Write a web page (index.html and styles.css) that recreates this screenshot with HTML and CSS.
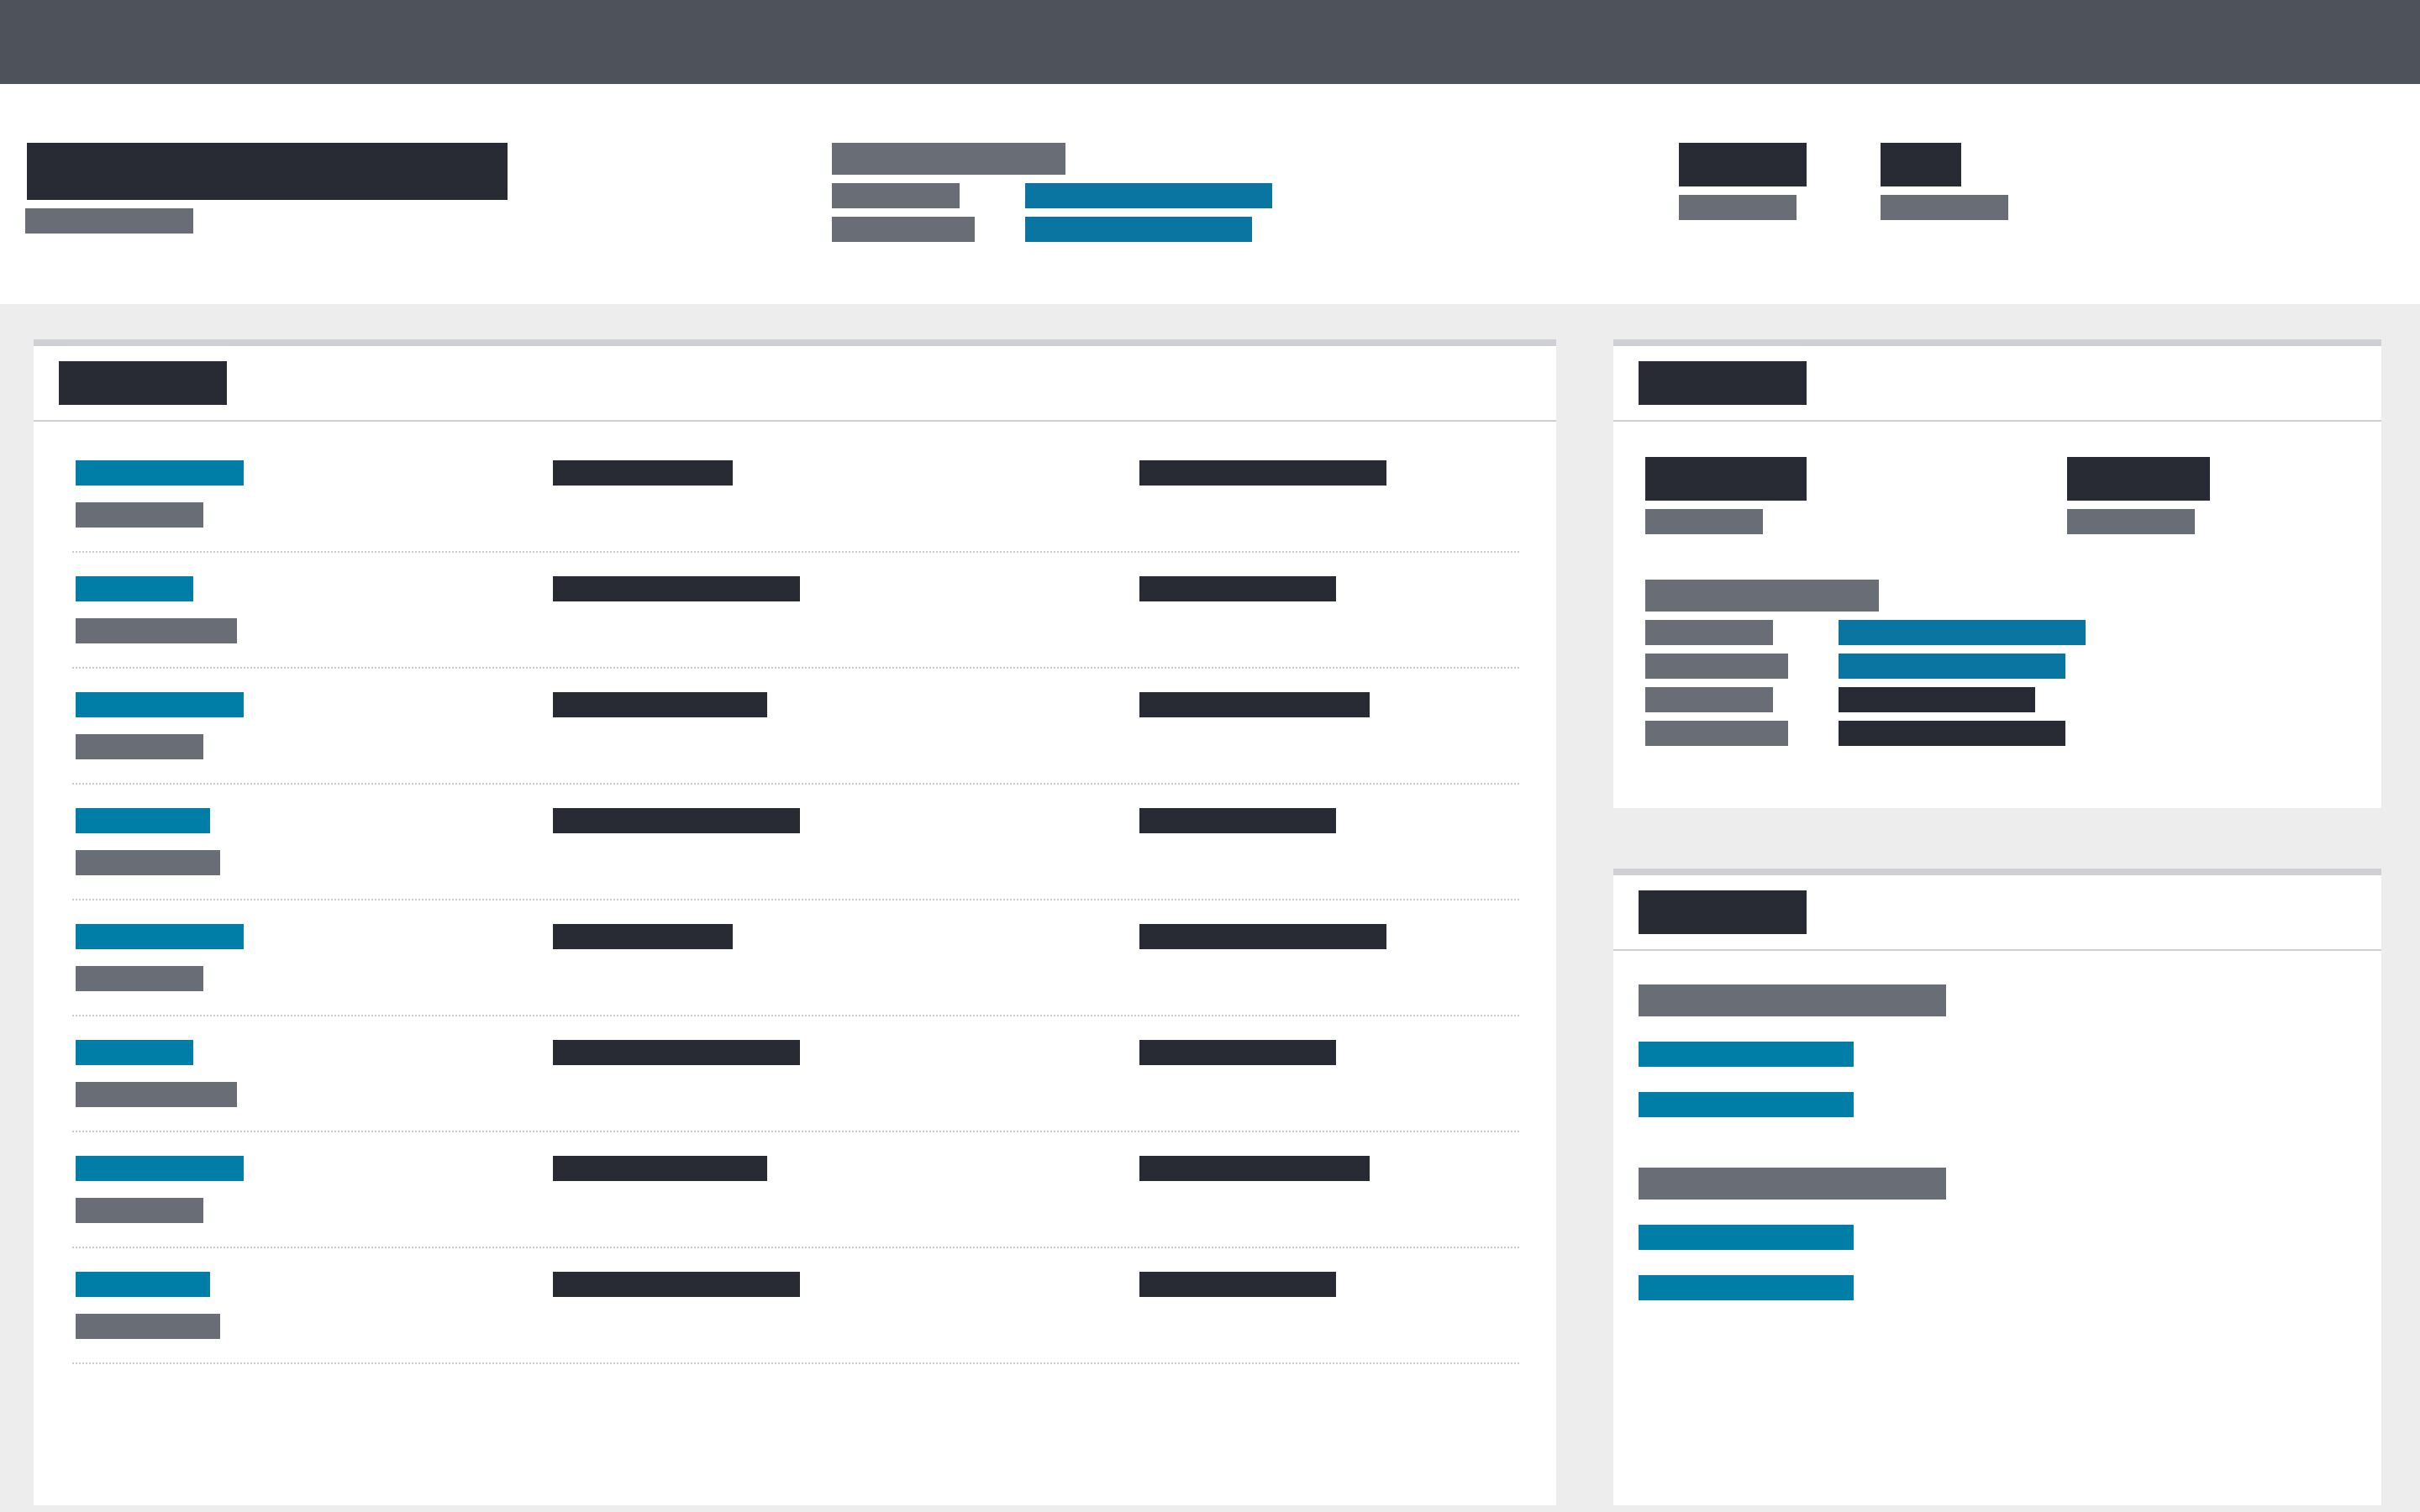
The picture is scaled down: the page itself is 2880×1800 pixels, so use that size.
FILE: index.html
```html
<!DOCTYPE html>
<html lang="en">
<head>
<meta charset="utf-8">
<title>Dashboard</title>
<link rel="stylesheet" href="styles.css">
</head>
<body>
<header class="topbar"></header>

<section class="summary">
  <div class="summary-title">
    <div class="bar dark title-bar"></div>
    <div class="bar gray sub-bar"></div>
  </div>
  <div class="summary-meta">
    <div class="bar gray w278 h38"></div>
    <div class="kv">
      <div class="bar gray w152"></div><div class="bar blue2 w294"></div>
      <div class="bar gray w170"></div><div class="bar blue2 w270"></div>
    </div>
  </div>
  <div class="summary-stats">
    <div class="stat stat-a">
      <div class="bar dark w152 h52"></div>
      <div class="bar gray w140 stat-label"></div>
    </div>
    <div class="stat">
      <div class="bar dark w96 h52"></div>
      <div class="bar gray w152 stat-label"></div>
    </div>
  </div>
</section>

<main class="content">
  <section class="card card-main">
    <div class="card-head"><div class="bar dark w200 h52"></div></div>
    <div class="list">
      <div class="row">
        <div class="cell"><div class="bar blue w200"></div><div class="bar gray w152 sub"></div></div>
        <div class="bar dark w214"></div>
        <div class="bar dark w294"></div>
      </div>
      <div class="row">
        <div class="cell"><div class="bar blue w140"></div><div class="bar gray w192 sub"></div></div>
        <div class="bar dark w294"></div>
        <div class="bar dark w234"></div>
      </div>
      <div class="row">
        <div class="cell"><div class="bar blue w200"></div><div class="bar gray w152 sub"></div></div>
        <div class="bar dark w255"></div>
        <div class="bar dark w274"></div>
      </div>
      <div class="row">
        <div class="cell"><div class="bar blue w160"></div><div class="bar gray w172 sub"></div></div>
        <div class="bar dark w294"></div>
        <div class="bar dark w234"></div>
      </div>
      <div class="row">
        <div class="cell"><div class="bar blue w200"></div><div class="bar gray w152 sub"></div></div>
        <div class="bar dark w214"></div>
        <div class="bar dark w294"></div>
      </div>
      <div class="row">
        <div class="cell"><div class="bar blue w140"></div><div class="bar gray w192 sub"></div></div>
        <div class="bar dark w294"></div>
        <div class="bar dark w234"></div>
      </div>
      <div class="row">
        <div class="cell"><div class="bar blue w200"></div><div class="bar gray w152 sub"></div></div>
        <div class="bar dark w255"></div>
        <div class="bar dark w274"></div>
      </div>
      <div class="row">
        <div class="cell"><div class="bar blue w160"></div><div class="bar gray w172 sub"></div></div>
        <div class="bar dark w294"></div>
        <div class="bar dark w234"></div>
      </div>
    </div>
  </section>

  <aside class="side">
    <section class="card card-info">
      <div class="card-head"><div class="bar dark w200 h52"></div></div>
      <div class="info-body">
        <div class="info-stats">
          <div class="stat">
            <div class="bar dark w192 h52"></div>
            <div class="bar gray w140 stat-label"></div>
          </div>
          <div class="stat">
            <div class="bar dark w170 h52"></div>
            <div class="bar gray w152 stat-label"></div>
          </div>
        </div>
        <div class="info-section">
          <div class="bar gray w278 h38"></div>
          <div class="kv">
            <div class="bar gray w152"></div><div class="bar blue2 w294"></div>
            <div class="bar gray w170"></div><div class="bar blue2 w270"></div>
            <div class="bar gray w152"></div><div class="bar dark w234"></div>
            <div class="bar gray w170"></div><div class="bar dark w270"></div>
          </div>
        </div>
      </div>
    </section>

    <section class="card card-links">
      <div class="card-head"><div class="bar dark w200 h52"></div></div>
      <div class="links-body">
        <div class="link-group">
          <div class="bar gray w366 h38"></div>
          <div class="bar blue w256 link"></div>
          <div class="bar blue w256 link"></div>
        </div>
        <div class="link-group">
          <div class="bar gray w366 h38"></div>
          <div class="bar blue w256 link"></div>
          <div class="bar blue w256 link"></div>
        </div>
      </div>
    </section>
  </aside>
</main>
</body>
</html>
```

FILE: styles.css
```css
* { box-sizing: border-box; }

html, body {
  margin: 0;
  padding: 0;
}

body {
  width: 2880px;
  height: 1800px;
  background: #ededed;
  font-family: "Liberation Sans", Arial, sans-serif;
  display: flex;
  flex-direction: column;
  overflow: hidden;
}

/* placeholder bars */
.bar { height: 30px; flex: none; }
.dark { background: #282b33; }
.gray { background: #696d75; }
.blue { background: #017ea8; }
.blue2 { background: #0b75a2; }

.h38 { height: 38px; }
.h52 { height: 52px; }

.w96 { width: 96px; }
.w140 { width: 140px; }
.w152 { width: 152px; }
.w160 { width: 160px; }
.w170 { width: 170px; }
.w172 { width: 172px; }
.w192 { width: 192px; }
.w200 { width: 200px; }
.w214 { width: 214px; }
.w234 { width: 234px; }
.w255 { width: 255px; }
.w256 { width: 256px; }
.w270 { width: 270px; }
.w274 { width: 274px; }
.w278 { width: 278px; }
.w294 { width: 294px; }
.w366 { width: 366px; }

/* top bar */
.topbar {
  height: 100px;
  background: #4d525b;
  flex: none;
}

/* summary strip */
.summary {
  height: 262px;
  flex: none;
  background: #ffffff;
  display: flex;
  padding: 70px 0 0 30px;
}

.summary-title { width: 960px; }
.title-bar { width: 572px; height: 68px; margin-left: 2px; }
.sub-bar { width: 200px; margin-top: 10px; }

.summary-meta { width: 1008px; }

.kv {
  display: grid;
  grid-template-columns: 230px auto;
  row-gap: 10px;
  margin-top: 10px;
}

.summary-stats { display: flex; }
.stat-a { width: 240px; }
.stat-label { margin-top: 10px; }

/* main area */
.content {
  flex: 1;
  display: flex;
  gap: 68px;
  padding: 42px 46px 8px 40px;
  min-height: 0;
}

.card {
  background: #ffffff;
  border-top: 8px solid #cfd0d4;
  display: flex;
  flex-direction: column;
}

.card-head {
  height: 90px;
  flex: none;
  padding: 18px 30px;
  border-bottom: 2px solid #d0d0d4;
}

.card-main { width: 1812px; }

.list { padding: 18px 44px 0 46px; }

.row {
  display: grid;
  grid-template-columns: 568px 698px 1fr;
  align-items: start;
  padding: 28px 0 28px 4px;
  border-bottom: 2px dotted #cacaca;
}

.sub { margin-top: 20px; }

/* side column */
.side {
  width: 914px;
  display: flex;
  flex-direction: column;
  gap: 72px;
}

.card-info { height: 558px; flex: none; }

.info-body { padding: 42px 38px; }

.info-stats {
  display: grid;
  grid-template-columns: 502px 1fr;
}

.info-section { margin-top: 54px; }

.card-links { flex: 1; }

.links-body {
  padding: 40px 30px;
  display: flex;
  flex-direction: column;
  gap: 60px;
}

.link { margin-top: 30px; }
```
